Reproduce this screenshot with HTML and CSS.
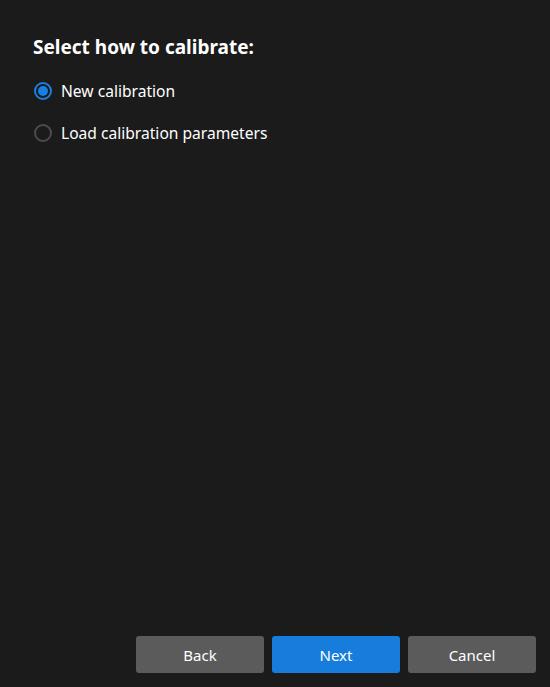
FILE: index.html
```html
<!DOCTYPE html>
<html lang="en">

<head>
    <meta charset="UTF-8">
    <meta name="viewport" content="width=device-width, initial-scale=1.0">
    <title>Calibration</title>
    <link rel="stylesheet" href="styles.css">
</head>

<body>
    <div class="page">

        <div class="content">
            <h1>Select how to calibrate:</h1>

            <label class="option">
                <input type="radio" name="mode" checked>
                <span class="dot"></span>
                <span>New calibration</span>
            </label>

            <label class="option">
                <input type="radio" name="mode">
                <span class="dot"></span>
                <span>Load calibration parameters</span>
            </label>
        </div>

        <!-- BUTTONS -->
        <div class="footer">
            <button class="btn">Back</button>
            <button class="btn primary">Next</button>
            <button class="btn">Cancel</button>
        </div>

    </div>
</body>

</html>
```

FILE: styles.css
```css
html,
body {
    margin: 0;
    height: 100%;
    background-color: #1b1b1b;
    color: #ffffff;
    font-family: "Noto Sans", "Open Sans", sans-serif;
}

.page {
    display: flex;
    flex-direction: column;
    height: 100%;
    box-sizing: border-box;
    padding: 0 14px 14px 33px;
}

.content {
    flex: 1;
    padding-top: 34px;
}

h1 {
    margin: 0 0 10px 0;
    font-size: 19px;
    font-weight: 700;
    line-height: 26px;
}

.option {
    display: flex;
    align-items: center;
    gap: 9px;
    height: 42px;
    padding-left: 1px;
    font-size: 15.6px;
    cursor: pointer;
}

.option input {
    display: none;
}

.option .dot {
    width: 18px;
    height: 18px;
    border: 2px solid #4c4c4c;
    border-radius: 50%;
    box-sizing: border-box;
    position: relative;
}

.option input:checked + .dot {
    border-color: #1a7fdf;
}

.option input:checked + .dot::after {
    content: "";
    position: absolute;
    left: 2px;
    top: 2px;
    width: 10px;
    height: 10px;
    border-radius: 50%;
    background-color: #1a7fdf;
}

.footer {
    display: flex;
    justify-content: flex-end;
    gap: 8px;
}

.btn {
    width: 128px;
    height: 37px;
    border: none;
    border-radius: 3px;
    background-color: #5b5b5b;
    color: #ffffff;
    font-family: inherit;
    font-size: 15px;
    cursor: pointer;
}

.btn.primary {
    background-color: #177ddc;
}
```
